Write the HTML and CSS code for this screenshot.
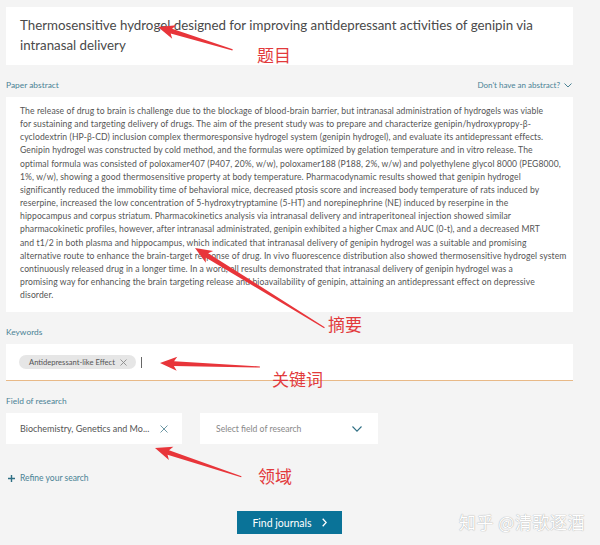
FILE: index.html
```html
<!DOCTYPE html>
<html lang="en">
<head>
  <meta charset="UTF-8">
  <title>Journal Finder</title>
  <link rel="stylesheet" href="styles.css">
</head>
<body>
  <div class="page">
    <div class="title-box">Thermosensitive hydrogel designed for improving antidepressant activities of genipin via intranasal delivery</div>

    <div class="field-head">
      <span class="field-label">Paper abstract</span>
      <span class="abstract-toggle">Don't have an abstract?
        <svg width="8" height="5" viewBox="0 0 8 5"><path d="M0.5 0.5L4 4L7.5 0.5" fill="none" stroke="#4a8294" stroke-width="1"/></svg>
      </span>
    </div>
    <div class="abstract-box">
      <p class="abstract-text">The release of drug to brain is challenge due to the blockage of blood-brain barrier, but intranasal administration of hydrogels was viable<br>
for sustaining and targeting delivery of drugs. The aim of the present study was to prepare and characterize genipin/hydroxypropy-β-<br>
cyclodextrin (HP-β-CD) inclusion complex thermoresponsive hydrogel system (genipin hydrogel), and evaluate its antidepressant effects.<br>
Genipin hydrogel was constructed by cold method, and the formulas were optimized by gelation temperature and in vitro release. The<br>
optimal formula was consisted of poloxamer407 (P407, 20%, w/w), poloxamer188 (P188, 2%, w/w) and polyethylene glycol 8000 (PEG8000,<br>
1%, w/w), showing a good thermosensitive property at body temperature. Pharmacodynamic results showed that genipin hydrogel<br>
significantly reduced the immobility time of behavioral mice, decreased ptosis score and increased body temperature of rats induced by<br>
reserpine, increased the low concentration of 5-hydroxytryptamine (5-HT) and norepinephrine (NE) induced by reserpine in the<br>
hippocampus and corpus striatum. Pharmacokinetics analysis via intranasal delivery and intraperitoneal injection showed similar<br>
pharmacokinetic profiles, however, after intranasal administrated, genipin exhibited a higher Cmax and AUC (0-t), and a decreased MRT<br>
and t1/2 in both plasma and hippocampus, which indicated that intranasal delivery of genipin hydrogel was a suitable and promising<br>
alternative route to enhance the brain-target response of drug. In vivo fluorescence distribution also showed thermosensitive hydrogel system<br>
continuously released drug in a longer time. In a word, all results demonstrated that intranasal delivery of genipin hydrogel was a<br>
promising way for enhancing the brain targeting release and bioavailability of genipin, attaining an antidepressant effect on depressive<br>
disorder.</p>
    </div>

    <div class="field-head">
      <span class="field-label">Keywords</span>
    </div>
    <div class="keyword-box">
      <span class="chip">Antidepressant-like Effect
        <svg width="7" height="7" viewBox="0 0 7 7"><path d="M0.5 0.5L6.5 6.5M6.5 0.5L0.5 6.5" stroke="#8a8a8a" stroke-width="0.9"/></svg>
      </span>
      <span class="caret"></span>
    </div>

    <div class="field-head">
      <span class="field-label">Field of research</span>
    </div>
    <div class="select-row">
      <div class="select-box">
        <span class="select-value">Biochemistry, Genetics and Mo...</span>
        <svg width="8" height="8" viewBox="0 0 8 8"><path d="M0.5 0.5L7.5 7.5M7.5 0.5L0.5 7.5" stroke="#5f8c9b" stroke-width="0.9"/></svg>
      </div>
      <div class="select-box">
        <span class="select-placeholder">Select field of research</span>
        <svg width="10" height="6" viewBox="0 0 10 6"><path d="M0.5 0.5L5 5.2L9.5 0.5" fill="none" stroke="#2f6f84" stroke-width="1.1"/></svg>
      </div>
    </div>

    <div class="refine">
      <svg width="7" height="7" viewBox="0 0 7 7"><path d="M3.5 0V7M0 3.5H7" stroke="#2f6f84" stroke-width="1.4"/></svg>
      <span>Refine your search</span>
    </div>

    <div class="actions">
      <button class="find-button">Find journals
        <svg width="5" height="9" viewBox="0 0 5 9"><path d="M0.7 0.7L4.2 4.5L0.7 8.3" fill="none" stroke="#fff" stroke-width="1.3"/></svg>
      </button>
    </div>
  </div>

  <div class="watermark">知乎 @清歌逐酒</div>

  <svg class="annotations" width="600" height="545" viewBox="0 0 600 545">
    <g fill="#e8353a">
      <polygon transform="translate(158 27) rotate(197.05)" points="0,0 -17,-7 -14,-2.4 -78,-0.6 -78,0.6 -14,2.4 -17,7"/>
      <polygon transform="translate(195 248) rotate(211.6)" points="0,0 -17,-7 -14,-2.4 -152,-0.6 -152,0.6 -14,2.4 -17,7"/>
      <polygon transform="translate(160 363) rotate(182.3)" points="0,0 -17,-7 -14,-2.4 -100,-0.6 -100,0.6 -14,2.4 -17,7"/>
      <polygon transform="translate(155 448) rotate(198.4)" points="0,0 -17,-7 -14,-2.4 -91,-0.6 -91,0.6 -14,2.4 -17,7"/>
    </g>
    <g class="annotation-text">
      <text x="257" y="61.5">题目</text>
      <text x="328" y="330.5">摘要</text>
      <text x="272" y="386">关键词</text>
      <text x="258" y="483">领域</text>
    </g>
  </svg>
</body>
</html>
```

FILE: styles.css
```css
body {
  margin: 0;
  background: #f4f4f4;
  font-family: 'Lato', 'Liberation Sans', sans-serif;
  color: #505050;
}

.page {
  width: 567px;
  padding: 7px 0 0 6px;
}

.title-box {
  background: #fff;
  padding: 8px 30px 10px 14px;
  font-size: 13.3px;
  line-height: 20px;
  color: #4a4a4a;
}

.field-head {
  display: flex;
  justify-content: space-between;
  align-items: center;
  height: 12px;
  margin: 14px 0 6px;
}

.field-label {
  font-size: 8.4px;
  color: #4a8294;
}

.abstract-toggle {
  display: flex;
  align-items: center;
  gap: 4px;
  font-size: 8px;
  color: #4a8294;
  padding-right: 1px;
}

.abstract-box {
  background: #fff;
  padding: 8px 14px 10px;
}

.abstract-text {
  margin: 0;
  font-size: 8.6px;
  letter-spacing: 0.1px;
  line-height: 13.15px;
  color: #555;
  white-space: nowrap;
}

.keyword-box {
  display: flex;
  align-items: center;
  height: 36px;
  padding-left: 13px;
  background: #fff;
  border-bottom: 1px solid #e8b987;
}

.chip {
  display: flex;
  align-items: center;
  gap: 5px;
  height: 14px;
  padding: 0 9px 0 10px;
  border-radius: 7px;
  background: #e6e6e6;
  font-size: 7.6px;
  color: #555;
}

.caret {
  width: 1px;
  height: 11px;
  margin-left: 5px;
  background: #666;
}

.select-row {
  display: flex;
  gap: 18px;
}

.select-box {
  display: flex;
  align-items: center;
  justify-content: space-between;
  width: 176px;
  height: 31px;
  padding: 0 14px 0 14px;
  box-sizing: border-box;
  background: #fff;
}

.select-box + .select-box {
  width: 178px;
  padding: 0 16px 0 16px;
}

.select-value {
  font-size: 9px;
  color: #555;
}

.select-placeholder {
  font-size: 8.6px;
  color: #888;
}

.refine {
  display: flex;
  align-items: center;
  gap: 5px;
  height: 12px;
  margin-top: 28px;
  padding-left: 2px;
  font-size: 8.5px;
  color: #4a8294;
}

.actions {
  display: flex;
  justify-content: center;
  margin-top: 27px;
}

.find-button {
  display: flex;
  align-items: center;
  gap: 10px;
  height: 23px;
  padding: 0 15px;
  border: none;
  border-radius: 0;
  background: #0a7398;
  color: #fff;
  font-family: 'Lato', 'Liberation Sans', sans-serif;
  font-size: 10.5px;
  cursor: pointer;
}

.watermark {
  position: absolute;
  left: 459px;
  top: 509px;
  font-family: 'Noto Sans CJK SC', sans-serif;
  font-size: 17px;
  color: #fff;
  text-shadow: 0 0 1px #aaa, 0 0 1px #bbb;
  letter-spacing: 0.5px;
}

.annotations {
  position: absolute;
  top: 0;
  left: 0;
  pointer-events: none;
}

.annotation-text text {
  font-family: 'Noto Sans CJK SC', sans-serif;
  font-size: 17px;
  fill: #e23a3c;
}
```
